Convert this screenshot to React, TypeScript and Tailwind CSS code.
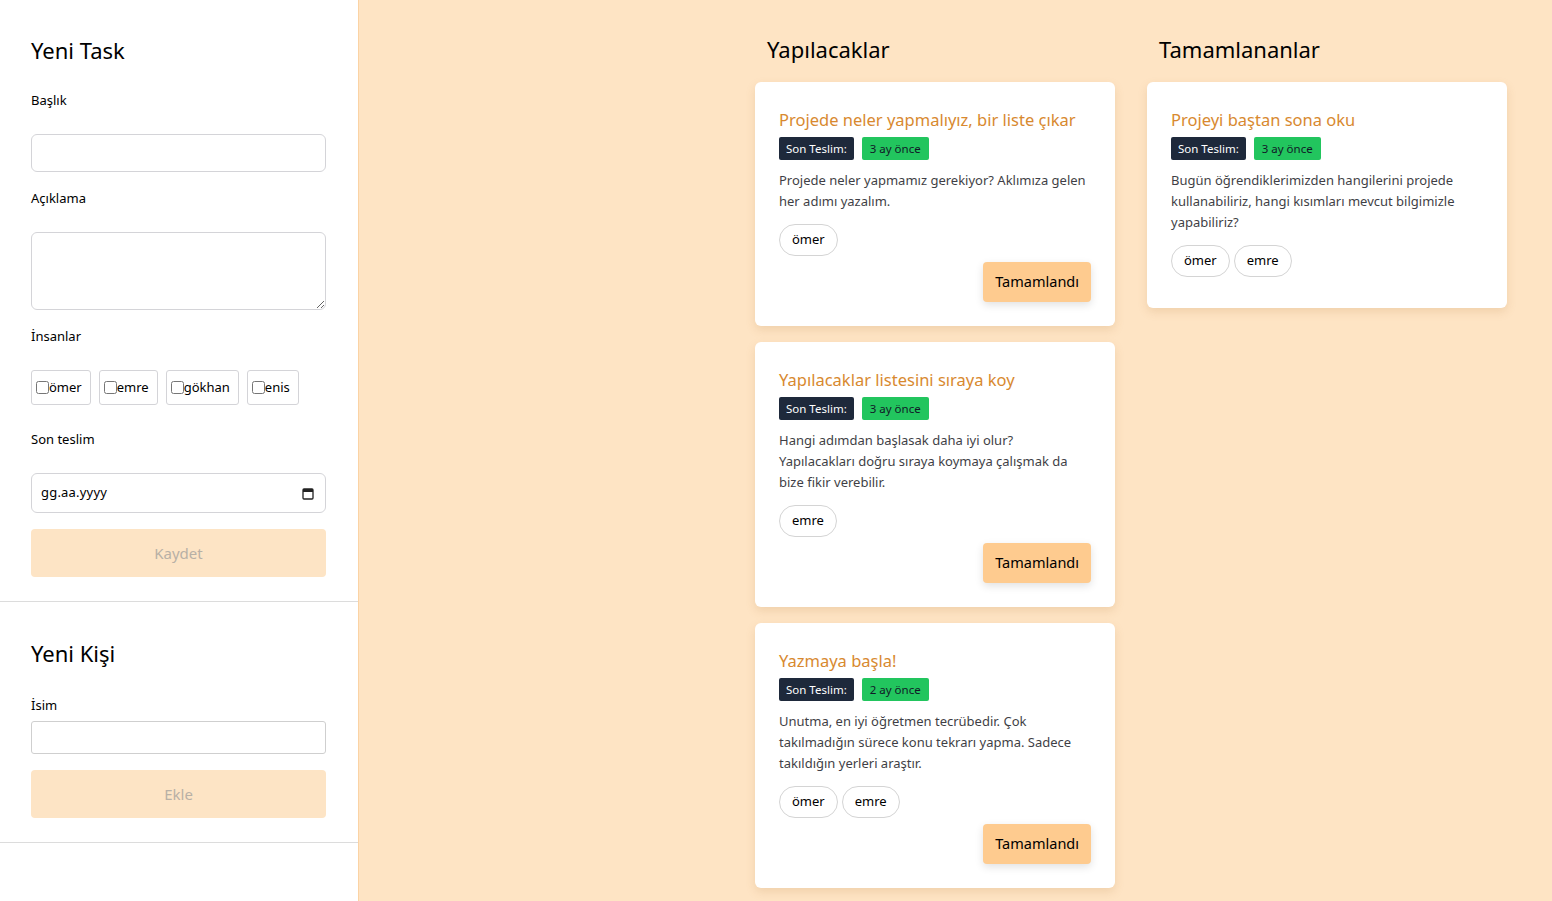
import React from 'react';

type Task = {
  title: string;
  due: string;
  description: string;
  people: string[];
};

const todo: Task[] = [
  {
    title: 'Projede neler yapmalıyız, bir liste çıkar',
    due: '3 ay önce',
    description: 'Projede neler yapmamız gerekiyor? Aklımıza gelen her adımı yazalım.',
    people: ['ömer'],
  },
  {
    title: 'Yapılacaklar listesini sıraya koy',
    due: '3 ay önce',
    description: 'Hangi adımdan başlasak daha iyi olur? Yapılacakları doğru sıraya koymaya çalışmak da bize fikir verebilir.',
    people: ['emre'],
  },
  {
    title: 'Yazmaya başla!',
    due: '2 ay önce',
    description: 'Unutma, en iyi öğretmen tecrübedir. Çok takılmadığın sürece konu tekrarı yapma. Sadece takıldığın yerleri araştır.',
    people: ['ömer', 'emre'],
  },
];

const done: Task[] = [
  {
    title: 'Projeyi baştan sona oku',
    due: '3 ay önce',
    description: 'Bugün öğrendiklerimizden hangilerini projede kullanabiliriz, hangi kısımları mevcut bilgimizle yapabiliriz?',
    people: ['ömer', 'emre'],
  },
];

const people = ['ömer', 'emre', 'gökhan', 'enis'];

const TaskCard: React.FC<{ task: Task; completed?: boolean }> = ({ task, completed }) => (
  <div className={`bg-white rounded-md shadow-[0_4px_10px_rgba(180,120,60,0.18)] px-6 pt-6 ${completed ? 'pb-[31px]' : 'pb-6'}`}>
    <h3 className="text-[16.5px] leading-[27px] text-[#d8892f]">{task.title}</h3>
    <div className="flex gap-2 mt-1">
      <span className="bg-[#1e293b] text-white text-[11.5px] leading-[23px] h-[23px] px-[7px] rounded-[2px]">Son Teslim:</span>
      <span className="bg-[#22c55e] text-[#111827] text-[11.5px] leading-[23px] h-[23px] px-2 rounded-[2px]">{task.due}</span>
    </div>
    <p className="text-[13px] leading-[21px] text-[#3f3f46] mt-[10px]">{task.description}</p>
    <div className="flex gap-1 mt-3">
      {task.people.map((p) => (
        <span key={p} className="h-8 px-3 flex items-center rounded-full border border-[#d4d4d4] text-[13px] text-black">
          {p}
        </span>
      ))}
    </div>
    {!completed && (
      <div className="flex justify-end mt-[6px]">
        <button className="h-10 px-3 rounded-[4px] bg-[#fecb8f] text-[14.5px] text-black shadow-[0_3px_8px_rgba(0,0,0,0.12)]">
          Tamamlandı
        </button>
      </div>
    )}
  </div>
);

const App: React.FC = () => {
  return (
    <div
      className="flex min-h-screen bg-[#fee4c4]"
      style={{ fontFamily: '"Noto Sans", "Open Sans", sans-serif' }}
    >
      {/* Sidebar */}
      <aside className="w-[359px] shrink-0 bg-white border-r border-[#fbd3a4]">
        <section className="pl-[31px] pr-[32px] pt-[36px] pb-6 border-b border-[#dcdcdc]">
          <h2 className="text-[22px] leading-[29px] text-black">Yeni Task</h2>
          <label className="block text-[13px] leading-[20px] text-black mt-[25px]">Başlık</label>
          <input className="block w-full h-[38px] mt-6 border border-[#d4d4d8] rounded-[6px] outline-none px-3" />
          <label className="block text-[13px] leading-[20px] text-black mt-4">Açıklama</label>
          <textarea className="block w-full h-[78px] mt-6 border border-[#d4d4d8] rounded-[6px] outline-none px-3" />
          <label className="block text-[13px] leading-[20px] text-black mt-4">İnsanlar</label>
          <div className="flex gap-2 mt-6">
            {people.map((p) => (
              <label key={p} className="h-[35px] flex items-center pl-1 pr-2 border border-[#d4d4d8] rounded-[3px] text-[13px] text-black">
                <input type="checkbox" className="m-0 w-[13px] h-[13px]" />
                {p}
              </label>
            ))}
          </div>
          <label className="block text-[13px] leading-[20px] text-black mt-6">Son teslim</label>
          <div className="flex items-center justify-between w-full h-[40px] mt-6 border border-[#d4d4d8] rounded-[6px] pl-[9px] pr-[11px]">
            <span className="text-[13px] text-black tracking-[0.2px]">gg.aa.yyyy</span>
            <svg width="12" height="13" viewBox="0 0 12 13">
              <rect x="1" y="2" width="10" height="10" rx="1" fill="none" stroke="#222" strokeWidth="1.3" />
              <rect x="1" y="2" width="10" height="3" fill="#222" />
            </svg>
          </div>
          <button className="block w-full h-12 mt-4 rounded-[4px] bg-[#fde4c5] text-[15px] text-[#b8b0a6]">Kaydet</button>
        </section>
        <section className="pl-[31px] pr-[32px] pt-[37px] pb-6 border-b border-[#dcdcdc]">
          <h2 className="text-[22px] leading-[29px] text-black">Yeni Kişi</h2>
          <label className="block text-[13px] leading-[20px] text-black mt-[27px]">İsim</label>
          <input className="block w-full h-[33px] mt-[6px] border border-[#cfcfcf] rounded-[3px] outline-none px-3" />
          <button className="block w-full h-12 mt-4 rounded-[4px] bg-[#fde4c5] text-[15px] text-[#b8b0a6]">Ekle</button>
        </section>
      </aside>

      {/* Boards */}
      <main className="flex-1 flex justify-end gap-8 pr-[45px] pt-[35px] pb-3">
        <div className="w-[360px]">
          <h2 className="px-3 text-[22px] leading-[29px] text-black mb-[18px]">Yapılacaklar</h2>
          <div className="flex flex-col gap-4">
            {todo.map((t) => (
              <TaskCard key={t.title} task={t} />
            ))}
          </div>
        </div>
        <div className="w-[360px]">
          <h2 className="px-3 text-[22px] leading-[29px] text-black mb-[18px]">Tamamlananlar</h2>
          <div className="flex flex-col gap-4">
            {done.map((t) => (
              <TaskCard key={t.title} task={t} completed />
            ))}
          </div>
        </div>
      </main>
    </div>
  );
};

export default App;
